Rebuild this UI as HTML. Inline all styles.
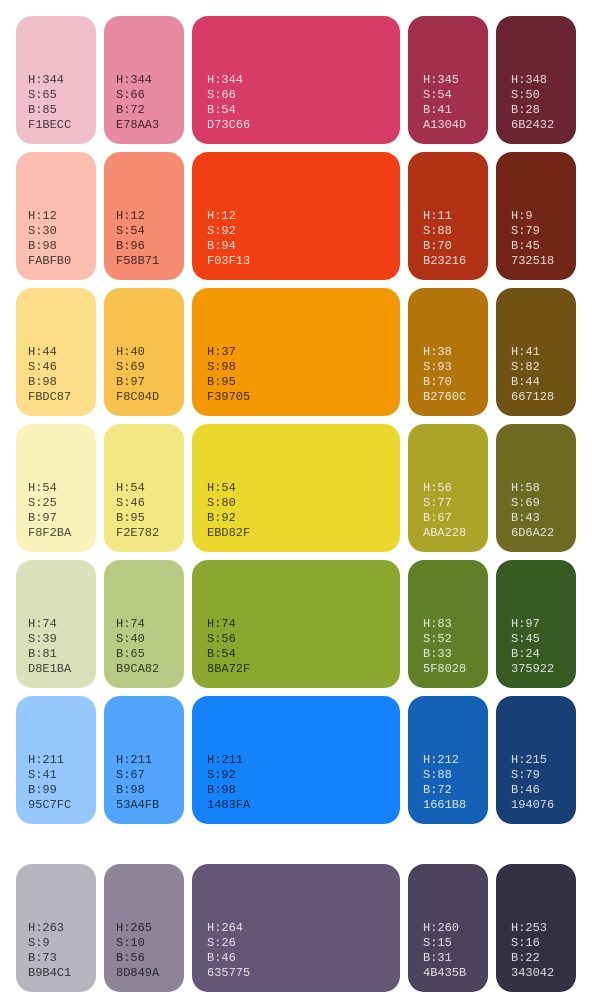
<!DOCTYPE html><html><head><style>
body{margin:0;width:592px;height:1008px;background:#fff;position:relative;font-family:"Liberation Mono",monospace;font-size:12px;line-height:15px}
.t{position:absolute;height:128px;border-radius:16px;box-sizing:border-box;display:flex;flex-direction:column;justify-content:flex-end;padding:0 0 11px 12px;color:rgba(0,0,0,.72);white-space:pre}
.w{color:rgba(255,255,255,.82)}
.p{padding-left:15px}
</style></head><body>
<script>
var rows=[[16,[["F1BECC",344,65,85],["E78AA3",344,66,72],["D73C66",344,66,54,1],["A1304D",345,54,41,1],["6B2432",348,50,28,1]]],
[152,[["FABFB0",12,30,98],["F58B71",12,54,96],["F03F13",12,92,94,1],["B23216",11,88,70,1],["732518",9,79,45,1]]],
[288,[["FBDC87",44,46,98],["F8C04D",40,69,97],["F39705",37,98,95],["B2760C",38,93,70,1],["667128",41,82,44,1,"705214"]]],
[424,[["F8F2BA",54,25,97],["F2E782",54,46,95],["EBD82F",54,80,92],["ABA228",56,77,67,1],["6D6A22",58,69,43,1]]],
[560,[["D8E1BA",74,39,81],["B9CA82",74,40,65],["8BA72F",74,56,54],["5F8028",83,52,33,1],["375922",97,45,24,1]]],
[696,[["95C7FC",211,41,99],["53A4FB",211,67,98],["1483FA",211,92,98],["1661B8",212,88,72,1],["194076",215,79,46,1]]],
[864,[["B9B4C1",263,9,73],["8D849A",265,10,56],["635775",264,26,46,1],["4B435B",260,15,31,1],["343042",253,16,22,1]]]];
var xs=[[16,80],[104,80],[192,208],[408,80],[496,80]],h="";
rows.forEach(function(r){r[1].forEach(function(c,i){h+='<div class="t'+(c[4]?' w':'')+(i>1?' p':'')+'" style="left:'+xs[i][0]+'px;top:'+r[0]+'px;width:'+xs[i][1]+'px;background:#'+(c[5]||c[0])+'">H:'+c[1]+'\nS:'+c[2]+'\nB:'+c[3]+'\n'+c[0]+'</div>';});});
document.write(h);
</script>
</body></html>
